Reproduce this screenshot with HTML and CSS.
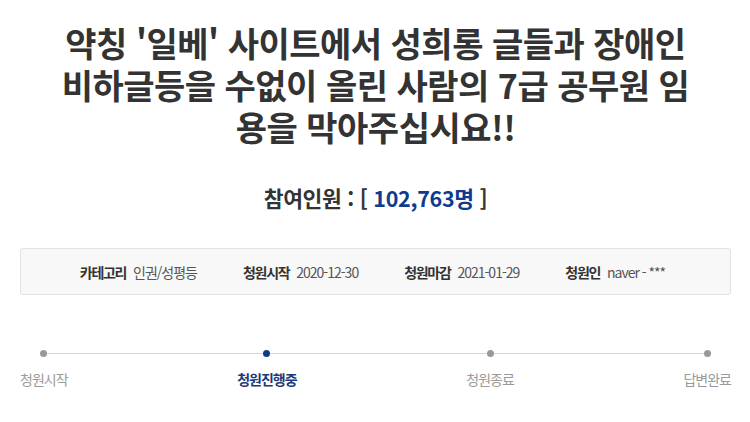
FILE: index.html
```html
<!DOCTYPE html>
<html lang="ko">
<head>
    <meta charset="UTF-8">
    <meta name="viewport" content="width=device-width, initial-scale=1.0">
    <title>청원 상세</title>
    <link rel="stylesheet" href="styles.css">
</head>
<body>
    <div class="petition">
        <h1 class="title">약칭 '일베' 사이트에서 성희롱 글들과 장애인 비하글등을 수없이 올린 사람의 7급 공무원 임용을 막아주십시요!!</h1>
        <div class="count">참여인원 : [ <span class="count-num">102,763명</span> ]</div>

        <ul class="info">
            <li><strong>카테고리</strong> 인권/성평등</li>
            <li><strong>청원시작</strong> 2020-12-30</li>
            <li><strong>청원마감</strong> 2021-01-29</li>
            <li><strong>청원인</strong> naver - ***</li>
        </ul>

        <ol class="steps">
            <li class="step"><span class="dot"></span>청원시작</li>
            <li class="step active"><span class="dot"></span>청원진행중</li>
            <li class="step"><span class="dot"></span>청원종료</li>
            <li class="step"><span class="dot"></span>답변완료</li>
        </ol>
    </div>
</body>
</html>
```

FILE: styles.css
```css
* {
    box-sizing: border-box;
}
body {
    margin: 0;
    background: #fff;
    font-family: "Noto Sans CJK KR", "Noto Sans", sans-serif;
    color: #333;
}
.petition {
    padding: 0 19px 0 20px;
}
.title {
    margin: 0;
    padding: 22px 38px 0;
    font-size: 34px;
    line-height: 42px;
    font-weight: 700;
    letter-spacing: -0.5px;
    text-align: center;
    color: #333;
}
.count {
    margin-top: 34px;
    font-size: 21.5px;
    font-weight: 700;
    text-align: center;
    letter-spacing: -0.3px;
    color: #333;
}
.count-num {
    color: #0d3c8e;
}
.info {
    list-style: none;
    margin: 35px 0 0;
    padding: 0;
    height: 47px;
    display: flex;
    justify-content: center;
    align-items: center;
    gap: 46px;
    background: #f8f8f8;
    border: 1px solid #e2e2e2;
    border-radius: 3px;
    font-size: 14px;
    letter-spacing: -1px;
    color: #555;
}
.info li:first-child {
    margin-left: -6px;
}
.info strong {
    color: #333;
    margin-right: 4px;
    letter-spacing: -1.3px;
}
.steps {
    position: relative;
    list-style: none;
    margin: 55px 0 0;
    padding: 0;
    display: flex;
    justify-content: space-between;
}
.steps::before {
    content: "";
    position: absolute;
    left: 24px;
    right: 24px;
    top: 3px;
    height: 1px;
    background: #d8d8d8;
}
.step {
    position: relative;
    display: flex;
    flex-direction: column;
    align-items: center;
    gap: 12px;
    font-size: 14px;
    letter-spacing: -1px;
    color: #9a9a9a;
}
.dot {
    width: 7px;
    height: 7px;
    border-radius: 50%;
    background: #999;
}
.step.active {
    color: #1b3a78;
    font-weight: 700;
}
.step.active .dot {
    background: #0d3c8e;
}
```
